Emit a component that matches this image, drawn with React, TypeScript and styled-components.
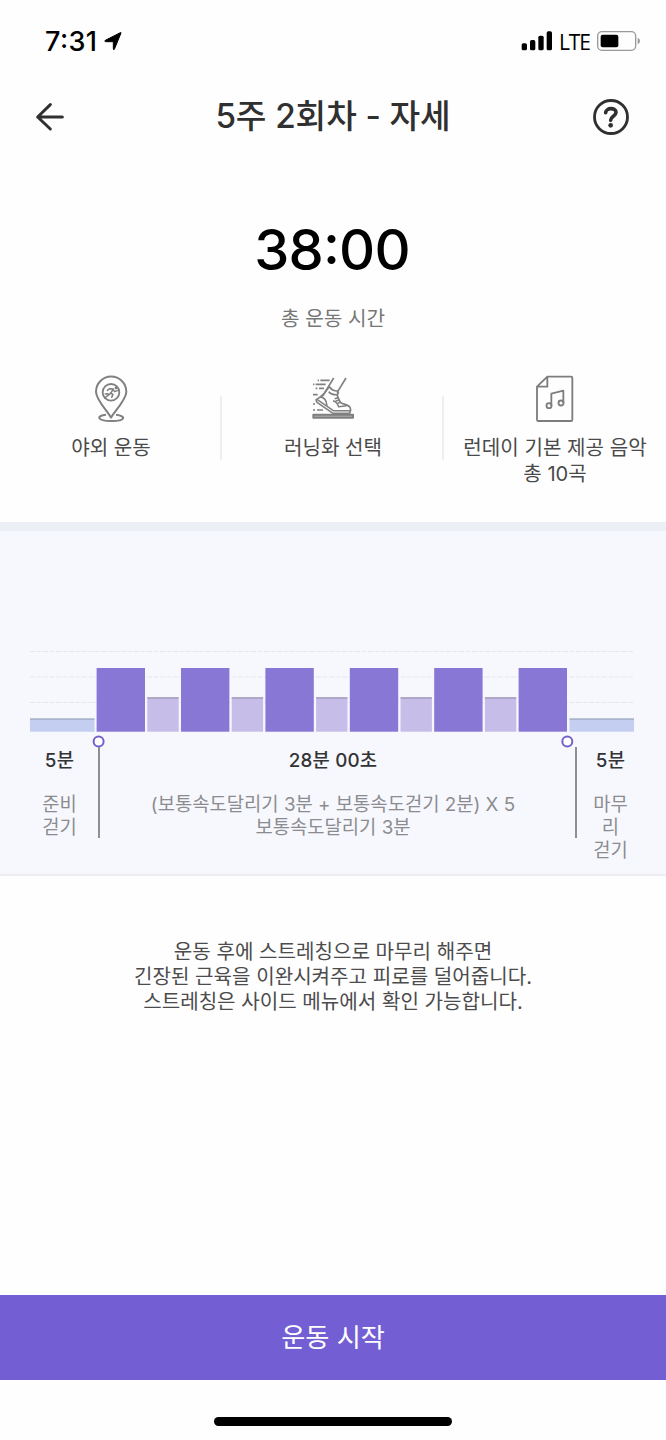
import React from 'react';
import styled, { createGlobalStyle } from 'styled-components';

const GlobalStyle = createGlobalStyle`
  * { box-sizing: border-box; }
  body {
    margin: 0;
    background: #fff;
    font-family: Inter, "Noto Sans CJK KR", sans-serif;
  }
  svg { display: block; flex: none; overflow: visible; }
`;

const Screen = styled.main`
  display: flex;
  flex-direction: column;
  width: 666px;
  height: 1440px;
  background: #fefefe;
  overflow: hidden;
`;

const StatusBar = styled.div`
  display: flex;
  justify-content: space-between;
  align-items: center;
  height: 82px;
  padding: 0 25px 0 45px;
  color: #000;
`;

const StatusGroup = styled.div<{ $gap: number }>`
  display: flex;
  align-items: center;
  gap: ${(p) => p.$gap}px;
`;

const Clock = styled.span`
  padding-top: 1px;
  font-size: 27px;
  font-weight: 550;
  line-height: 32px;
  letter-spacing: 0.4px;
  font-feature-settings: 'case';
`;

const Network = styled.span`
  width: 31px;
  padding-top: 1px;
  font-family: "Open Sans", sans-serif;
  font-size: 21px;
  font-weight: 500;
  line-height: 32px;
  letter-spacing: -1.2px;
`;

const Header = styled.header`
  display: flex;
  justify-content: space-between;
  align-items: center;
  height: 70px;
  padding: 0 37px 0 35px;
`;

const Title = styled.h1`
  margin: -3px 0 0 8px;
  color: #303030;
  font-size: 33.3px;
  font-weight: 500;
  line-height: 48px;
  letter-spacing: -0.1px;
  white-space: nowrap;
`;

const IconButton = styled.button`
  display: flex;
  padding: 0;
  border: 0;
  background: none;
`;

const Summary = styled.section`
  display: flex;
  flex-direction: column;
  align-items: center;
  height: 222px;
  padding-top: 62px;
`;

const Duration = styled.div`
  margin-right: 2px;
  color: #000;
  font-size: 56px;
  font-weight: 500;
  line-height: 72px;
  letter-spacing: -0.8px;
  font-feature-settings: 'case';
`;

const DurationLabel = styled.div`
  margin-top: 19px;
  color: #777;
  font-size: 20.2px;
  line-height: 28px;
`;

const Options = styled.section`
  display: grid;
  grid-template-columns: repeat(3, 1fr);
  height: 148px;
`;

const Option = styled.div`
  display: flex;
  flex-direction: column;
  align-items: center;
  position: relative;

  & + &::before {
    content: '';
    position: absolute;
    left: -2px;
    top: 22px;
    width: 2px;
    height: 64px;
    background: #eeeef0;
  }
`;

const OptionLabel = styled.div`
  margin-top: 11px;
  color: #4a4a4a;
  font-size: 20.1px;
  line-height: 26px;
  text-align: center;
  white-space: pre;
`;

const Plan = styled.section`
  height: 354px;
  border-top: 9px solid #ecf0f6;
  border-bottom: 2px solid #ededf1;
  background: #f7f8fd;
  padding: 116px 32px 0 30px;
`;

const PlanLabels = styled.div`
  display: grid;
  grid-template-columns: 68px 479px 57px;
`;

const Stage = styled.div<{ $before?: number; $after?: number }>`
  padding-top: 1px;
  padding-left: ${(p) => p.$before ?? 0}px;
  padding-right: ${(p) => p.$after ?? 0}px;
  text-align: center;
`;

const MainStage = styled(Stage)`
  height: 91px;
  border: solid #8e8e93;
  border-width: 0 2px;
`;

const StageTime = styled.div`
  color: #333336;
  font-size: 18.8px;
  font-weight: 500;
  line-height: 26px;
  letter-spacing: 0.2px;
`;

const StageText = styled.div`
  margin-top: 18.5px;
  color: #8c8c90;
  font-size: 18.8px;
  line-height: 23px;
  white-space: pre;
`;

const Tip = styled.p`
  flex: 1;
  margin: 0;
  padding-top: 64px;
  color: #4c4c4c;
  font-size: 20.1px;
  line-height: 25px;
  text-align: center;
  white-space: pre;
`;

const StartButton = styled.button`
  height: 85px;
  padding: 0;
  border: 0;
  background: #735fd3;
  color: #fff;
  font-family: inherit;
  font-size: 26.2px;
  line-height: 36px;
`;

const HomeArea = styled.footer`
  display: flex;
  justify-content: center;
  height: 60px;
  padding-top: 36.5px;
`;

const HomeIndicator = styled.div`
  width: 238px;
  height: 9px;
  border-radius: 5px;
  background: #000;
`;

const LocationArrow = () => (
  <svg width="18" height="19" viewBox="0 0 54 57">
    <path d="M51 3 31 52q-3 3-3-2V29H5q-5-1-1-4L49 2q3-1 2 1Z" fill="#000" stroke="#000" strokeWidth="3" strokeLinejoin="round" />
  </svg>
);

const Signal = () => (
  <svg width="31" height="20" viewBox="0 0 93 60" fill="#000">
    <rect x="2" y="37" width="16" height="21" rx="5" />
    <rect x="27" y="27" width="16" height="31" rx="5" />
    <rect x="52" y="14" width="16" height="44" rx="5" />
    <rect x="77" y="1" width="16" height="57" rx="5" />
  </svg>
);

const Battery = () => (
  <svg width="44" height="20" viewBox="0 0 132 60">
    <rect x="2" y="2" width="114" height="56" rx="13" fill="none" stroke="#999" strokeWidth="4" />
    <rect x="11" y="11" width="53" height="38" rx="6" fill="#000" />
    <path d="M122 20q7 3 7 10t-7 10Z" fill="#999" />
  </svg>
);

const BackArrow = () => (
  <svg width="30" height="28" viewBox="0 0 90 84" fill="none" stroke="#303030" strokeWidth="9" strokeLinecap="round" strokeLinejoin="round">
    <path d="M82 42H8M46 5 8 42l38 36" />
  </svg>
);

const HelpIcon = () => (
  <svg width="36" height="36" viewBox="0 0 108 108" fill="none" stroke="#303030">
    <circle cx="54" cy="54" r="49.5" strokeWidth="8.5" />
    <path d="M38 41c1-16 31-16 31-1 0 12-16 12-16 24" strokeWidth="11" strokeLinecap="round" />
    <circle cx="53" cy="79" r="7" fill="#303030" stroke="none" />
  </svg>
);

const PinIcon = () => (
  <svg width="60" height="50" viewBox="3 25 180 150" fill="none" stroke="#808080" strokeWidth="6" strokeLinejoin="round">
    <path d="M93 156C85 139 48 103 48 78a45 45 0 0 1 91 0c0 25-38 61-46 78Z" />
    <path d="M78 147c-30 3-28 18 15 19s48-15 15-19" />
    <circle cx="93" cy="80" r="25" strokeWidth="5.5" />
    <g strokeWidth="4.5" strokeLinecap="round">
      <path d="m74 97 18-14 8-13-11-1-7 5M99 71l5 7 8-3M91 82l8 4-4 9M84 84l-8 1" />
      <circle cx="108" cy="67" r="2" />
    </g>
  </svg>
);

const ShoeIcon = () => (
  <svg width="65" height="50" viewBox="3 28 195 150" fill="none" stroke="#808080" strokeWidth="5" strokeLinejoin="round">
    <path d="M101 40 67 96M138 40l-27 44" />
    <path d="m85 69-12 17-14 12-11 8 3 7 48 33h50l3-10-2-8c-4-8-18-8-28-14-5-6-8-16-11-24-10 1-20-3-25-9" />
    <path d="m84 70 5-3c5 8 14 12 23 12l3 5-3 7" />
    <path d="m52 105 48 33h51M60 98c11-1 20 7 21 25M99 108c8 2 14 9 17 18l24-3M104 102l10-3M107 109l11-3M112 116l11-4" strokeWidth="4.5" />
    <rect x="40" y="150" width="119" height="9" strokeWidth="6" fill="#aaa" />
    <path d="M53 47h4M61 47h28M39 59h4M47 59h30M47 71h5M57 71h15M39 90h14M39 118h6M39 136h6M51 136h18" strokeWidth="5" />
  </svg>
);

const MusicIcon = () => (
  <svg width="40" height="50" viewBox="606 70 120 150" fill="none" stroke="#7d7d7d" strokeWidth="5.5" strokeLinejoin="round">
    <path d="M643 78h71q4 0 4 4v125q0 4-4 4h-98q-4 0-4-4v-99ZM612 108h31V78" />
    <path d="M655 165v-36l36-9v36" />
    <circle cx="648" cy="165" r="7.5" />
    <circle cx="684" cy="157" r="7.5" />
  </svg>
);

const RUNS = [0, 1, 2, 3, 4, 5].map((i) => 66.6 + i * 84.4);

const IntervalChart = () => (
  <svg width="604" height="100" viewBox="0 0 604 100">
    <g stroke="#e5e7ec" strokeDasharray="5 1.5">
      <path d="M0 4.5h603M0 30h603M0 55.5h603M0 81h603" />
    </g>
    {[0, 539.5].map((x) => (
      <g key={x}>
        <rect x={x} y="71.5" width="64.5" height="13.2" fill="#c4cef0" />
        <rect x={x} y="71.5" width="64.5" height="1.1" fill="#9aa3b8" />
      </g>
    ))}
    {RUNS.map((x) => (
      <rect key={x} x={x} y="21" width="48.4" height="63.7" fill="#8977d6" />
    ))}
    {RUNS.slice(0, 5).map((x) => (
      <g key={x}>
        <rect x={x + 50.7} y="50.5" width="31.4" height="34.2" fill="#c6bee8" />
        <rect x={x + 50.7} y="50.4" width="31.4" height="1.1" fill="#928ca6" />
      </g>
    ))}
    {[68.6, 537.3].map((x) => (
      <circle key={x} cx={x} cy="94.5" r="5" fill="#fff" stroke="#7460cd" strokeWidth="2" />
    ))}
  </svg>
);

export default function App() {
  return (
    <>
      <GlobalStyle />
      <Screen>
        <StatusBar>
          <StatusGroup $gap={7}>
            <Clock>7:31</Clock>
            <LocationArrow />
          </StatusGroup>
          <StatusGroup $gap={7}>
            <Signal />
            <Network>LTE</Network>
            <Battery />
          </StatusGroup>
        </StatusBar>
        <Header>
          <IconButton aria-label="뒤로"><BackArrow /></IconButton>
          <Title>5주 2회차 - 자세</Title>
          <IconButton aria-label="도움말"><HelpIcon /></IconButton>
        </Header>
        <Summary>
          <Duration>38:00</Duration>
          <DurationLabel>총 운동 시간</DurationLabel>
        </Summary>
        <Options>
          <Option>
            <PinIcon />
            <OptionLabel>야외 운동</OptionLabel>
          </Option>
          <Option>
            <ShoeIcon />
            <OptionLabel>러닝화 선택</OptionLabel>
          </Option>
          <Option>
            <MusicIcon />
            <OptionLabel>{'런데이 기본 제공 음악\n총 10곡'}</OptionLabel>
          </Option>
        </Options>
        <Plan>
          <IntervalChart />
          <PlanLabels>
            <Stage $after={9}>
              <StageTime>5분</StageTime>
              <StageText>{'준비\n걷기'}</StageText>
            </Stage>
            <MainStage $after={9}>
              <StageTime>28분 00초</StageTime>
              <StageText>{'(보통속도달리기 3분 + 보통속도걷기 2분) X 5\n보통속도달리기 3분'}</StageText>
            </MainStage>
            <Stage $before={10}>
              <StageTime>5분</StageTime>
              <StageText>{'마무\n리\n걷기'}</StageText>
            </Stage>
          </PlanLabels>
        </Plan>
        <Tip>{'운동 후에 스트레칭으로 마무리 해주면\n긴장된 근육을 이완시켜주고 피로를 덜어줍니다.\n스트레칭은 사이드 메뉴에서 확인 가능합니다.'}</Tip>
        <StartButton>운동 시작</StartButton>
        <HomeArea>
          <HomeIndicator />
        </HomeArea>
      </Screen>
    </>
  );
}
